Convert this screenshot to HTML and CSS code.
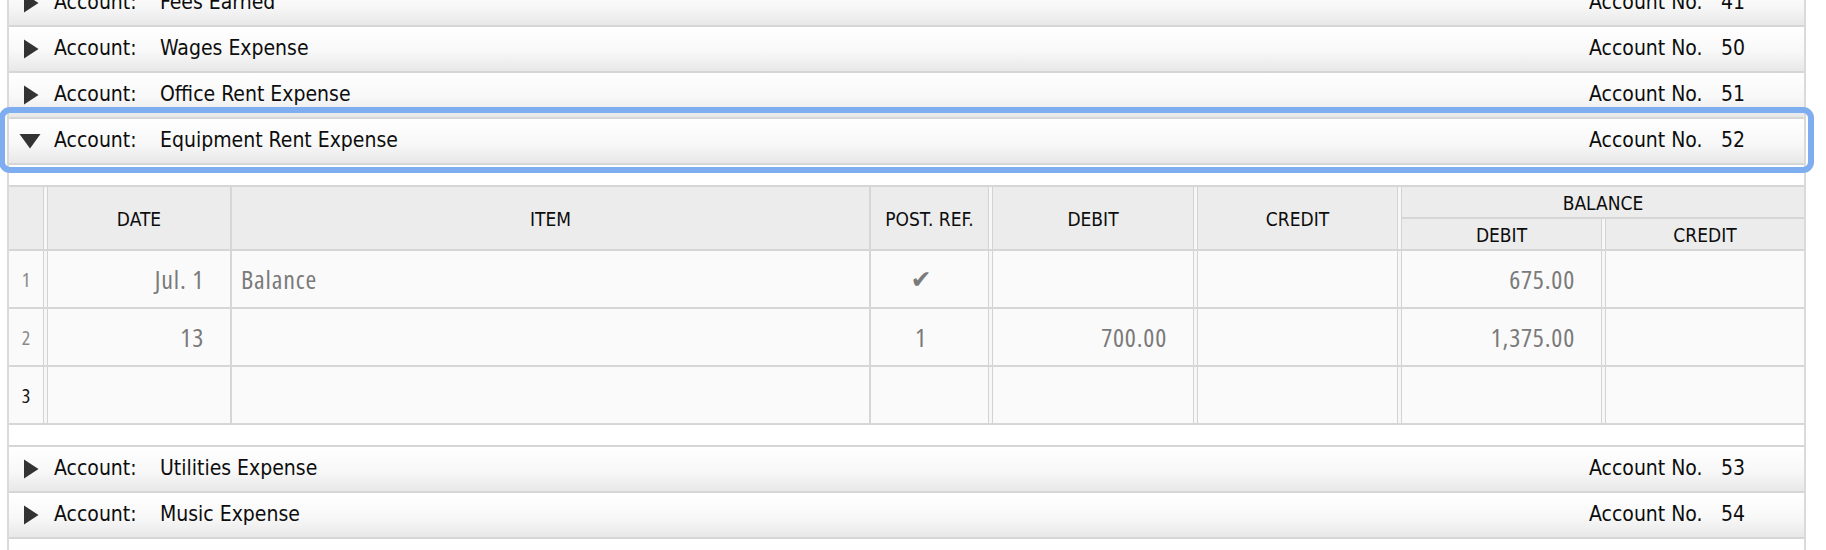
FILE: index.html
```html
<!DOCTYPE html>
<html lang="en">
<head>
<meta charset="utf-8">
<title>General Ledger</title>
<link rel="stylesheet" href="styles.css">
</head>
<body>
<div class="ledger">
  <div class="acct-head">
    <span class="tri-box"><svg class="tri" width="16" height="20" viewBox="0 0 16 20"><path d="M1 0.5 L15.5 10 L1 19.5 Z"/></svg></span>
    <span class="lbl">Account:</span><span class="name">Fees Earned</span>
    <span class="no"><span class="no-lbl">Account No.</span><span class="no-num">41</span></span>
  </div>
  <div class="acct-head">
    <span class="tri-box"><svg class="tri" width="16" height="20" viewBox="0 0 16 20"><path d="M1 0.5 L15.5 10 L1 19.5 Z"/></svg></span>
    <span class="lbl">Account:</span><span class="name">Wages Expense</span>
    <span class="no"><span class="no-lbl">Account No.</span><span class="no-num">50</span></span>
  </div>
  <div class="acct-head">
    <span class="tri-box"><svg class="tri" width="16" height="20" viewBox="0 0 16 20"><path d="M1 0.5 L15.5 10 L1 19.5 Z"/></svg></span>
    <span class="lbl">Account:</span><span class="name">Office Rent Expense</span>
    <span class="no"><span class="no-lbl">Account No.</span><span class="no-num">51</span></span>
  </div>
  <div class="acct-head focus">
    <span class="tri-box down"><svg class="tri" width="22" height="16" viewBox="0 0 22 16"><path d="M0.5 1 H21.5 L11 15.5 Z"/></svg></span>
    <span class="lbl">Account:</span><span class="name">Equipment Rent Expense</span>
    <span class="no"><span class="no-lbl">Account No.</span><span class="no-num">52</span></span>
  </div>
  <div class="panel">
    <div class="grid">
      <div class="th dbl span2"></div>
      <div class="th sgl span2">DATE</div>
      <div class="th sgl span2">ITEM</div>
      <div class="th dbl span2">POST. REF.</div>
      <div class="th dbl span2">DEBIT</div>
      <div class="th dbl span2">CREDIT</div>
      <div class="th bal">BALANCE</div>
      <div class="th dbl">DEBIT</div>
      <div class="th">CREDIT</div>

      <div class="td rn dbl">1</div>
      <div class="td sgl right">Jul. 1</div>
      <div class="td sgl">Balance</div>
      <div class="td dbl center"><span class="check">✔</span></div>
      <div class="td dbl right"></div>
      <div class="td dbl right"></div>
      <div class="td dbl right">675.00</div>
      <div class="td right"></div>

      <div class="td rn dbl">2</div>
      <div class="td sgl right">13</div>
      <div class="td sgl"></div>
      <div class="td dbl center">1</div>
      <div class="td dbl right">700.00</div>
      <div class="td dbl right"></div>
      <div class="td dbl right">1,375.00</div>
      <div class="td right"></div>

      <div class="td rn dbl active">3</div>
      <div class="td sgl right"></div>
      <div class="td sgl"></div>
      <div class="td dbl center"></div>
      <div class="td dbl right"></div>
      <div class="td dbl right"></div>
      <div class="td dbl right"></div>
      <div class="td right"></div>
    </div>
  </div>
  <div class="acct-head">
    <span class="tri-box"><svg class="tri" width="16" height="20" viewBox="0 0 16 20"><path d="M1 0.5 L15.5 10 L1 19.5 Z"/></svg></span>
    <span class="lbl">Account:</span><span class="name">Utilities Expense</span>
    <span class="no"><span class="no-lbl">Account No.</span><span class="no-num">53</span></span>
  </div>
  <div class="acct-head">
    <span class="tri-box"><svg class="tri" width="16" height="20" viewBox="0 0 16 20"><path d="M1 0.5 L15.5 10 L1 19.5 Z"/></svg></span>
    <span class="lbl">Account:</span><span class="name">Music Expense</span>
    <span class="no"><span class="no-lbl">Account No.</span><span class="no-num">54</span></span>
  </div>
  <div class="acct-head acct-end"></div>
</div>
</body>
</html>
```

FILE: styles.css
```css
* { box-sizing: border-box; }

body {
  margin: 0;
  background: #ffffff;
  font-family: "DejaVu Sans Condensed", "DejaVu Sans", sans-serif;
  font-stretch: condensed;
  color: #111111;
}

.ledger {
  margin: -21px 20px 0 7px;
  border-left: 2px solid #dadada;
  border-right: 2px solid #dadada;
  min-height: 620px;
  background: #ffffff;
}

.acct-head {
  display: flex;
  align-items: center;
  height: 46px;
  border-top: 2px solid #d6d6d6;
  padding: 0 0 3px 10px;
  background: linear-gradient(to bottom, #ffffff 0%, #f8f8f8 55%, #e8e8e8 100%);
  font-size: 21px;
  color: #0d0d0d;
  white-space: nowrap;
}

.acct-head.focus {
  position: relative;
  z-index: 1;
  border-radius: 1px;
  outline: 6px solid #7eaef0;
  outline-offset: 4px;
}

.tri-box {
  width: 24px;
  display: flex;
  justify-content: center;
  align-items: center;
  padding-top: 2px;
}

.tri-box.down { padding-top: 3px; margin-left: -1px; margin-right: 1px; }

.tri { display: block; fill: #333333; }

.lbl {
  margin-left: 11px;
  width: 106px;
}

.name { flex: 1; }

.no {
  width: 215px;
  display: flex;
}

.no-lbl { width: 132px; }

.panel {
  border-top: 2px solid #d6d6d6;
  padding: 20px 0;
  background: #ffffff;
}

.grid {
  display: grid;
  grid-template-columns: 39px 184px 639px 122px 205px 204px 204px 198px;
  grid-template-rows: 32px 32px 58px 58px 58px;
  border-top: 2px solid #d6d6d6;
}

.th {
  display: flex;
  align-items: center;
  justify-content: center;
  background-color: #ececec;
  border-bottom: 2px solid #d6d6d6;
  font-size: 19px;
  color: #0d0d0d;
  padding-top: 1px;
}

.span2 { grid-row: span 2; }
.bal { grid-column: span 2; }

.sgl { border-right: 2px solid #d6d6d6; }

.dbl {
  padding-right: 5px;
  background-image: linear-gradient(to left, #d3d3d3 0, #d3d3d3 1px, #f7f7f7 1px, #f7f7f7 4px, #d3d3d3 4px, #d3d3d3 5px, transparent 5px);
}

.td {
  display: flex;
  align-items: center;
  background-color: #fafafa;
  border-bottom: 2px solid #d6d6d6;
  padding: 0 26px 0 9px;
  font-family: "Open Sans", sans-serif;
  font-stretch: 75%;
  font-size: 26px;
  letter-spacing: 0.8px;
  color: #7a7a7a;
}

.td.dbl { padding-right: 31px; }

.td.right { justify-content: flex-end; }
.td.center { justify-content: center; }

.td.rn {
  justify-content: center;
  padding: 0 5px 0 0;
  font-size: 20px;
  letter-spacing: 0;
  color: #8a8a8a;
}

.td.rn.active { color: #111111; }

.check {
  font-family: "DejaVu Sans", sans-serif;
  font-stretch: normal;
  font-size: 25px;
  letter-spacing: 0;
  color: #7a7a7a;
}

.acct-end { background: linear-gradient(to bottom, #ffffff 0%, #fbfbfb 100%); }
```
